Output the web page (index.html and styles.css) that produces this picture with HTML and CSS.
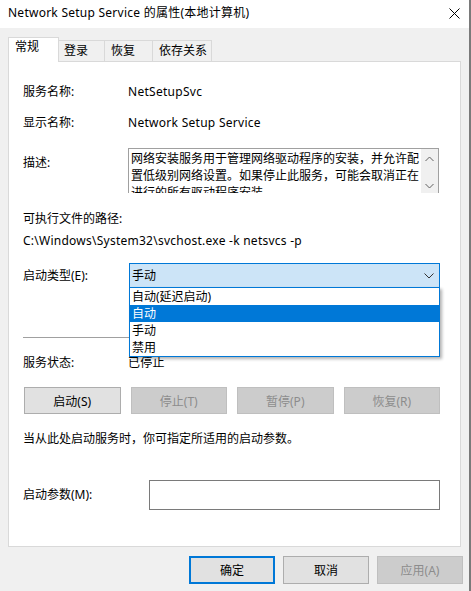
FILE: index.html
```html
<!DOCTYPE html>
<html>
<head>
    <meta charset="UTF-8">
    <title>Network Setup Service 的属性(本地计算机)</title>
    <link rel="stylesheet" href="styles.css">
</head>
<body>
    <div class="window">
        <div class="titlebar">
            <span class="title">Network Setup Service 的属性(本地计算机)</span>
            <svg class="close" width="11" height="11" viewBox="0 0 11 11">
                <path d="M0.5 0.5 L10.5 10.5 M10.5 0.5 L0.5 10.5" stroke="#000" stroke-width="1" fill="none"/>
            </svg>
        </div>

        <div class="tabs">
            <div class="tab active">常规</div>
            <div class="tab tab-login">登录</div>
            <div class="tab tab-recover">恢复</div>
            <div class="tab tab-deps">依存关系</div>
        </div>

        <div class="panel">
            <div class="row row-name">
                <span class="label">服务名称:</span>
                <span class="value">NetSetupSvc</span>
            </div>
            <div class="row row-display">
                <span class="label">显示名称:</span>
                <span class="value">Network Setup Service</span>
            </div>
            <div class="row row-desc">
                <span class="label desc-label">描述:</span>
                <div class="desc">
                    <div class="desc-text">网络安装服务用于管理网络驱动程序的安装，并允许配置低级别网络设置。如果停止此服务，可能会取消正在进行的所有驱动程序安装。</div>
                    <div class="scrollbar">
                        <svg width="9" height="6" viewBox="0 0 9 6"><path d="M0.5 5 L4.5 1 L8.5 5" stroke="#606060" fill="none"/></svg>
                        <svg width="9" height="6" viewBox="0 0 9 6"><path d="M0.5 1 L4.5 5 L8.5 1" stroke="#606060" fill="none"/></svg>
                    </div>
                </div>
            </div>
            <div class="path-label">可执行文件的路径:</div>
            <div class="path">C:\Windows\System32\svchost.exe -k netsvcs -p</div>

            <div class="row row-startup">
                <span class="label">启动类型(E):</span>
                <div class="combo">
                    <span class="combo-value">手动</span>
                    <svg class="combo-arrow" width="10" height="6" viewBox="0 0 10 6"><path d="M0.5 0.5 L5 5 L9.5 0.5" stroke="#333" fill="none"/></svg>
                    <ul class="dropdown">
                        <li>自动(延迟启动)</li>
                        <li class="selected">自动</li>
                        <li>手动</li>
                        <li>禁用</li>
                    </ul>
                </div>
            </div>

            <div class="sep"></div>

            <div class="row row-status">
                <span class="label">服务状态:</span>
                <span class="value">已停止</span>
            </div>

            <div class="svc-buttons">
                <button class="btn">启动(S)</button>
                <button class="btn disabled">停止(T)</button>
                <button class="btn disabled">暂停(P)</button>
                <button class="btn disabled">恢复(R)</button>
            </div>

            <p class="hint">当从此处启动服务时，你可指定所适用的启动参数。</p>

            <div class="row row-params">
                <span class="label label-wide">启动参数(M):</span>
                <div class="params-input"></div>
            </div>
        </div>

        <div class="footer">
            <button class="btn btn-foot default">确定</button>
            <button class="btn btn-foot">取消</button>
            <button class="btn btn-foot disabled">应用(A)</button>
        </div>
    </div>
</body>
</html>
```

FILE: styles.css
```css
* {
    box-sizing: border-box;
}

body {
    margin: 0;
    width: 471px;
    height: 591px;
    background-color: #f0f0f0;
    font-family: "Noto Sans", "Noto Sans CJK SC", sans-serif;
    font-size: 12px;
    line-height: 16px;
    color: #000;
    overflow: hidden;
}

.window {
    height: 591px;
    border-right: 2px solid #7a7a7a;
}

/* barra de titulo */
.titlebar {
    height: 28px;
    background-color: #fff;
    display: flex;
    align-items: center;
    justify-content: space-between;
    padding: 0 9px 2px 8px;
}

.title {
    font-size: 12px;
    letter-spacing: 0.25px;
}

/* pestañas */
.tabs {
    height: 33px;
    display: flex;
    align-items: flex-end;
    padding-left: 8px;
}

.tab {
    height: 21px;
    padding: 2px 0 0 5px;
    border-top: 1px solid #d9d9d9;
    border-right: 1px solid #d9d9d9;
    background-color: #f0f0f0;
}

.tab.active {
    width: 51px;
    height: 25px;
    padding: 1px 0 0 6px;
    border-left: 1px solid #d9d9d9;
    background-color: #fff;
    margin-bottom: -1px;
    position: relative;
    z-index: 1;
}

.tab-login {
    width: 46px;
}

.tab-recover {
    width: 48px;
    padding-left: 6px;
}

.tab-deps {
    width: 59px;
    padding-left: 6px;
}

/* panel principal */
.panel {
    height: 486px;
    margin: 0 8px;
    border: 1px solid #d9d9d9;
    background-color: #fff;
    padding: 22px 20px 0 14px;
}

.row {
    display: flex;
    align-items: center;
}

.label {
    width: 105px;
    flex-shrink: 0;
}

.label-wide {
    width: 126px;
}

.value {
    letter-spacing: 0.28px;
}

.row-display {
    margin-top: 15px;
}

.row-desc {
    margin-top: 17px;
    align-items: flex-start;
}

.desc-label {
    padding-top: 7px;
}

.desc {
    width: 311px;
    height: 45px;
    border: 1px solid #a0a0a0;
    border-bottom: none;
    display: flex;
    overflow: hidden;
}

.desc-text {
    width: 292px;
    padding: 1px 0 0 2px;
    line-height: 17px;
}

.scrollbar {
    width: 17px;
    background-color: #f0f0f0;
    display: flex;
    flex-direction: column;
    align-items: center;
    justify-content: space-between;
    padding: 7px 0 4px;
}

.path-label {
    margin-top: 18px;
}

.path {
    margin-top: 6px;
    letter-spacing: 0.25px;
}

.row-startup {
    margin-top: 14px;
}

.combo {
    position: relative;
    width: 312px;
    height: 25px;
    margin-left: 1px;
    background-color: #cce4f7;
    border: 1px solid #0078d7;
    display: flex;
    align-items: center;
    justify-content: space-between;
    padding: 0 5px 0 2px;
}

.dropdown {
    position: absolute;
    top: 100%;
    left: -1px;
    right: -1px;
    margin: 0;
    padding: 0;
    list-style: none;
    background-color: #fff;
    border: 1px solid #0078d7;
    box-shadow: 2px 2px 3px rgba(0, 0, 0, 0.3);
    z-index: 2;
}

.dropdown li {
    height: 17px;
    line-height: 17px;
    padding-left: 2px;
}

.dropdown li.selected {
    background-color: #0078d7;
    color: #fff;
}

.sep {
    margin-top: 49px;
    height: 1px;
    background-color: #a0a0a0;
}

.row-status {
    margin-top: 17px;
}

.svc-buttons {
    margin: 16px 0 0 1px;
    display: grid;
    grid-template-columns: repeat(4, 1fr);
    gap: 10px;
    width: 416px;
}

.btn {
    height: 27px;
    font-family: inherit;
    font-size: 12px;
    color: #000;
    background-color: #e1e1e1;
    border: 1px solid #adadad;
    padding: 0;
    border-radius: 0;
}

.btn.disabled {
    background-color: #cccccc;
    border-color: #bfbfbf;
    color: #8c8c8c;
}

.hint {
    margin: 17px 0 0;
}

.row-params {
    margin-top: 33px;
}

.params-input {
    width: 291px;
    height: 30px;
    border: 1px solid #7a7a7a;
    background-color: #fff;
}

/* botones inferiores */
.footer {
    display: flex;
    justify-content: flex-end;
    gap: 8px;
    padding-right: 6px;
    margin-top: 9px;
}

.btn-foot {
    width: 86px;
    height: 28px;
}

.btn-foot.default {
    border: 2px solid #0078d7;
}
```
